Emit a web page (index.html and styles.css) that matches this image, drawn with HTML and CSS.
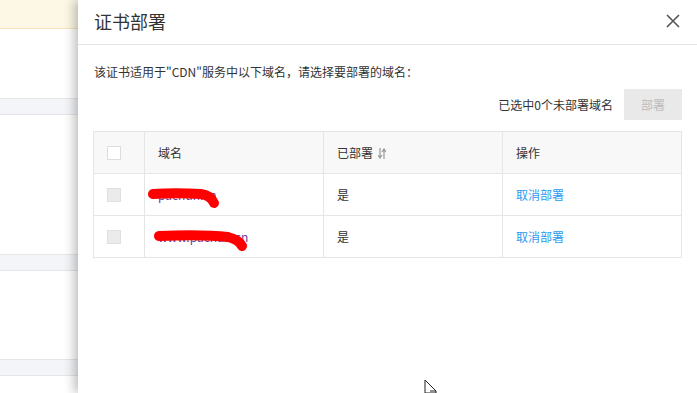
FILE: index.html
```html
<!DOCTYPE html>
<html lang="zh-CN">
<head>
    <meta charset="UTF-8">
    <meta name="viewport" content="width=device-width, initial-scale=1.0">
    <title>证书部署</title>
    <link rel="stylesheet" href="styles.css">
</head>
<body>
    <div class="page">
        <div class="backdrop">
            <div class="notice"></div>
            <div class="band band-1"></div>
            <div class="band band-2"></div>
            <div class="band band-3"></div>
        </div>
        <div class="panel">
            <div class="panel-head">
                <span class="panel-title">证书部署</span>
                <svg class="close" width="14" height="14" viewBox="0 0 14 14">
                    <path d="M1 1 L13 13 M13 1 L1 13" stroke="#555" stroke-width="1.6" fill="none"/>
                </svg>
            </div>
            <div class="panel-body">
                <p class="desc">该证书适用于"CDN"服务中以下域名，请选择要部署的域名：</p>
                <div class="toolbar">
                    <span class="count">已选中0个未部署域名</span>
                    <button class="btn-deploy" disabled>部署</button>
                </div>
                <table class="domains">
                    <thead>
                        <tr>
                            <th class="col-check"><span class="check"></span></th>
                            <th class="col-name">域名</th>
                            <th class="col-state">已部署
                                <svg class="sort" width="8" height="11" viewBox="0 0 8 11">
                                    <path d="M2 0 V9 M0 7 L2 10 L4 7" stroke="#999" stroke-width="1.2" fill="none"/>
                                    <path d="M6 11 V2 M4 4 L6 1 L8 4" stroke="#999" stroke-width="1.2" fill="none"/>
                                </svg>
                            </th>
                            <th class="col-op">操作</th>
                        </tr>
                    </thead>
                    <tbody>
                        <tr>
                            <td class="col-check"><span class="check check-off"></span></td>
                            <td class="col-name"><span class="domain">pachun.cn</span>
                                <svg class="scribble" width="80" height="28" viewBox="0 0 80 28">
                                    <path d="M7 12 C20 11 40 11 55 12 C62 13 66 16 68 21" stroke="#f00" stroke-width="10" stroke-linecap="round" fill="none"/>
                                </svg>
                            </td>
                            <td>是</td>
                            <td><a class="op">取消部署</a></td>
                        </tr>
                        <tr>
                            <td class="col-check"><span class="check check-off"></span></td>
                            <td class="col-name"><span class="domain">www.pachun.cn</span>
                                <svg class="scribble" width="110" height="28" viewBox="0 0 110 28">
                                    <path d="M13 12 C38 11 64 11 82 13 C90 15 94 18 96 22" stroke="#f00" stroke-width="10" stroke-linecap="round" fill="none"/>
                                </svg>
                            </td>
                            <td>是</td>
                            <td><a class="op">取消部署</a></td>
                        </tr>
                    </tbody>
                </table>
            </div>
            <svg class="cursor" width="14" height="16" viewBox="0 0 14 16">
                <path d="M1 1 V14 M1 1 L12 12 H6 M1 14 H12 V12" stroke="#222" stroke-width="1" fill="none"/>
            </svg>
        </div>
    </div>
</body>
</html>
```

FILE: styles.css
```css
*{
    box-sizing: border-box;
}
html, body{
    margin: 0;
    padding: 0;
}
body{
    font-family: "Noto Sans CJK SC", "Liberation Sans", sans-serif;
    font-size: 12px;
    color: #333;
    background: #fff;
}
.page{
    display: flex;
    width: 697px;
    height: 393px;
    overflow: hidden;
}
.backdrop{
    width: 78px;
    flex-shrink: 0;
    background: #fff;
}
.notice{
    height: 29px;
    background: #fdf8e5;
    border-bottom: 1px solid #fbe4bd;
}
.band{
    height: 17px;
    background: #f4f5f8;
    border-top: 1px solid #e6e6e9;
    border-bottom: 1px solid #e6e6e9;
}
.band-1{ margin-top: 69px; }
.band-2{ margin-top: 139px; }
.band-3{ margin-top: 88px; }

.panel{
    position: relative;
    flex: 1;
    background: #fff;
    box-shadow: -4px 0 10px rgba(0,0,0,0.25);
}
.panel-head{
    height: 45px;
    display: flex;
    align-items: center;
    justify-content: space-between;
    padding: 0 17px 2px 16px;
    border-bottom: 1px solid #e3e3e3;
}
.panel-title{
    font-size: 18px;
    color: #333;
}
.panel-body{
    padding: 0 15px;
}
.desc{
    margin: 18px 0 0 1px;
    line-height: 18px;
    color: #333;
}
.toolbar{
    display: flex;
    justify-content: flex-end;
    align-items: center;
    margin-top: 8px;
    gap: 11px;
}
.count{
    color: #333;
}
.btn-deploy{
    width: 58px;
    height: 31px;
    border: none;
    background: #e9e9e9;
    color: #bbb;
    font-family: inherit;
    font-size: 12px;
}
.domains{
    width: 589px;
    margin-top: 11px;
    border-collapse: collapse;
    table-layout: fixed;
}
.domains th, .domains td{
    height: 42px;
    border: 1px solid #e6e6e6;
    padding: 0 0 0 13px;
    text-align: left;
    font-weight: normal;
    color: #333;
    position: relative;
}
.domains thead th{
    background: #f8f8f8;
}
.col-check{ width: 51px; }
.col-name{ width: 179px; }
.col-state{ width: 179px; }
.check{
    display: block;
    width: 14px;
    height: 14px;
    border: 1px solid #ddd;
    background: #fff;
}
.check-off{
    background: #ebebeb;
    border-color: #e0e0e0;
}
.sort{
    vertical-align: -1px;
    margin-left: 2px;
}
.domain{
    color: #6a3d9a;
}
.scribble{
    position: absolute;
    left: 1px;
    top: 8px;
}
.op{
    color: #2b9af3;
}
.cursor{
    position: absolute;
    left: 346px;
    top: 379px;
}
```
